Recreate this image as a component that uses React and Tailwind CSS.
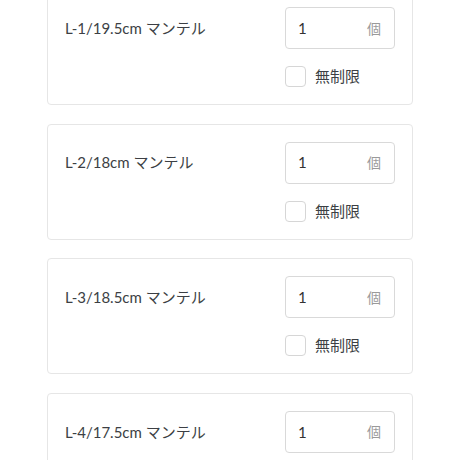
import { useState } from "react";

const items = [
    { id: 1, name: "L-1/19.5cm マンテル" },
    { id: 2, name: "L-2/18cm マンテル" },
    { id: 3, name: "L-3/18.5cm マンテル" },
    { id: 4, name: "L-4/17.5cm マンテル" },
];

const font = { fontFamily: "Lato, 'Noto Sans CJK JP', sans-serif" };

const ItemCard = ({ item }) => {
    const [qty, setQty] = useState("1");
    const [unlimited, setUnlimited] = useState(false);

    return (
        <div className="rounded-[4px] border border-[#e6e6e6] bg-white px-[17px] py-[17px]">
            <div className="flex h-[42px] items-center justify-between">
                <p className="text-[15px] text-[#3c3f44]">{item.name}</p>
                <div className="flex h-[42px] w-[110px] items-center rounded-[4px] border border-[#d9d9d9] pl-[12px] pr-[13px]">
                    <input
                        value={qty}
                        onChange={(e) => setQty(e.target.value)}
                        className="w-full bg-transparent text-[15px] text-[#333] outline-none"
                        style={font}
                    />
                    <span className="shrink-0 text-[14px] text-[#9a9a9a]">個</span>
                </div>
            </div>
            <div className="mt-[17px] flex h-[21px] justify-end">
                <label className="flex h-[21px] w-[110px] cursor-pointer items-center gap-[9px]">
                    <input
                        type="checkbox"
                        checked={unlimited}
                        onChange={() => setUnlimited(!unlimited)}
                        className="peer sr-only"
                    />
                    <span className="h-[21px] w-[21px] shrink-0 rounded-[4px] border border-[#d6d6d6] bg-white peer-checked:bg-[#3c3f44]" />
                    <span className="text-[15px] leading-[21px] text-[#3c3f44]">無制限</span>
                </label>
            </div>
        </div>
    );
};

const App = () => {
    return (
        <div className="h-[460px] overflow-hidden bg-white" style={font}>
            <div className="ml-[47px] mr-[47px] -mt-[11px] flex flex-col gap-[18.67px]">
                {items.map((item) => (
                    <ItemCard key={item.id} item={item} />
                ))}
            </div>
        </div>
    );
};

export default App;
